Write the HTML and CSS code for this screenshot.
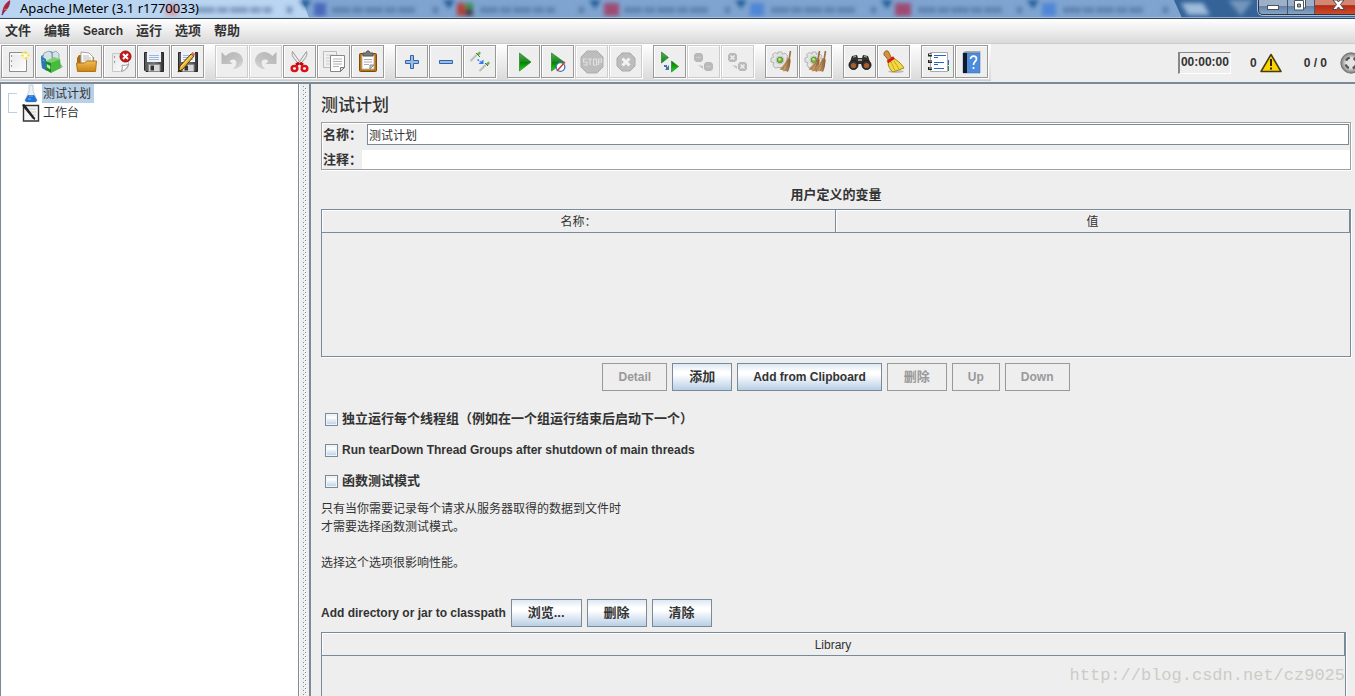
FILE: index.html
```html
<!DOCTYPE html>
<html lang="zh-CN">
<head>
<meta charset="utf-8">
<title>Apache JMeter (3.1 r1770033)</title>
<link rel="stylesheet" href="styles.css">
</head>
<body>
<svg class="defs" width="0" height="0" aria-hidden="true">
  <defs>
    <linearGradient id="green" x1="0" y1="0" x2="0" y2="1"><stop offset="0" stop-color="#4fae50"/><stop offset=".48" stop-color="#178a1b"/><stop offset=".52" stop-color="#087d08"/><stop offset="1" stop-color="#19e010"/></linearGradient>
    <linearGradient id="paper" x1="0" y1="0" x2="1" y2="1"><stop offset="0" stop-color="#e6e6e6"/><stop offset="1" stop-color="#fff"/></linearGradient>
    <linearGradient id="folder" x1="0" y1="0" x2="0" y2="1"><stop offset="0" stop-color="#f2bc55"/><stop offset="1" stop-color="#c98412"/></linearGradient>
    <linearGradient id="disk" x1="0" y1="0" x2="1" y2="0"><stop offset="0" stop-color="#555"/><stop offset=".5" stop-color="#777"/><stop offset="1" stop-color="#333"/></linearGradient>
    <linearGradient id="curl" x1="0" y1="0" x2="1" y2="1"><stop offset="0" stop-color="#b4b4b4"/><stop offset=".7" stop-color="#c6c6c6"/><stop offset="1" stop-color="#e4e4e4"/></linearGradient>
    <linearGradient id="straw" x1="0" y1="0" x2="1" y2="0"><stop offset="0" stop-color="#a88050"/><stop offset=".5" stop-color="#c79f6c"/><stop offset="1" stop-color="#8d6236"/></linearGradient>
    <radialGradient id="chrome"><stop offset="0" stop-color="#fff"/><stop offset=".6" stop-color="#ccc"/><stop offset="1" stop-color="#777"/></radialGradient>
    <filter id="soft"><feGaussianBlur stdDeviation="2"/></filter>
    <g id="floppy">
      <path d="M7.500 7.500h19v19H9l-1.500-1.500z" fill="url(#disk)" stroke="#272727"/>
      <path d="M10 7h14v10H10z" fill="#eef4fb"/><path d="M12 10.500h10M12 12.500h10M12 14.500h10" stroke="#9fb7d4"/>
      <path d="M11.500 19.500h11.500v7H11.500z" fill="#d8d8d8" stroke="#888"/><path d="M13.500 20.500h3.500v5h-3.500z" fill="#333"/>
    </g>
    <g id="gear">
      <path d="M13 7h4l.5 2.500L20 8l3 3-1.500 2.500L24 14v4l-2.500 1-1 3-3 .5H13l-3 .5-2-3 1-2.500-3-.5v-4l2.500-1L7.500 9.500l3-2L13 9z" fill="#e4e4e4" stroke="#b4b4b4"/>
      <circle cx="15" cy="15" r="4" fill="#f0f0f0" stroke="#c4c4c4"/><circle cx="15" cy="15" r="2.800" fill="#75b843" stroke="#55952a"/><circle cx="14.500" cy="14.200" r="1.200" fill="#c2eb89"/>
    </g>
    <g id="besom">
      <path d="M25.500 6L24 15" stroke="#9a6b42" stroke-width="1.600"/>
      <path d="M22.500 13l3 1c0 4-.5 9-2.500 13l-2.500-1-2 .5-1-1.500-3-.5c3-3 6-7 8-11.500z" fill="url(#straw)"/><path d="M23 15c-2 4-4 7-6 9.500M24 15c-1 5-3 9-4 11M25 15c-.5 4-1 8-2.500 11" stroke="#8b6038" stroke-width=".6" fill="none"/>
    </g>
  </defs>
</svg>

<header class="titlebar">
  <svg class="glass" viewBox="0 0 1355 18" preserveAspectRatio="none" aria-hidden="true">
    <path d="M0 0h302l7 18H0z" fill="#b9d5f1"/><path d="M302 0h876l8 18H309z" fill="#7fa4d0"/>
    <path d="M1174 0h181v18h-173z" fill="#356398"/>
    <g filter="url(#soft)">
      <path d="M299 0h12l-5 9zM443 0h12l-6 9zM589 0h12l-6 9zM735 0h12l-6 9zM881 0h12l-6 9zM1027 0h12l-6 9z" fill="#235b96"/>
      <path d="M1181 3h22l7 12h-22z" fill="#9dbbdb"/><path d="M1228 0h25l-12 16z" fill="#7396bb"/>
      <path d="M314 3h12v13h-12z" fill="#4a69be"/><path d="M457 3h8v13h-8z" fill="#b1423d"/><path d="M465 3h8v6h-8z" fill="#3d8c50"/><path d="M465 9h8v7h-8z" fill="#443e4e"/>
      <path d="M604 3h15v13h-15zM895 3h16v13h-16z" fill="#9d4c73"/><path d="M750 3h14v13h-14zM1042 3h14v13h-14z" fill="#4f86d5"/><path d="M166 4h12v12h-12z" fill="#d2a0ab"/>
      <g stroke-width="6" stroke="#45658f" stroke-dasharray="18 2 11 2" opacity=".5"><path d="M197 10h75M332 10h83M480 10h75M624 10h84M771 10h85M918 10h84M1063 10h80"/></g>
      <g stroke="#45658f" stroke-width="2" opacity=".8"><path d="M287 7l5 6m0-6l-5 6M433 7l5 6m0-6l-5 6M579 7l5 6m0-6l-5 6M725 7l5 6m0-6l-5 6M871 7l5 6m0-6l-5 6M1017 7l5 6m0-6l-5 6M1163 7l5 6m0-6l-5 6"/></g>
    </g>
    <path d="M0 17.500h1355" stroke="#b4cce6" opacity=".7"/>
  </svg>
  <svg class="feather" viewBox="0 0 16 18" aria-hidden="true"><path d="M2 15C2 8 5 3 10 0c1 4-2 10-7 13z" fill="#c6222d"/><path d="M2 15L9 2" stroke="#6b3779" stroke-width="1.500"/><path d="M4 9l3 1" stroke="#ef7d39"/></svg>
  <h1 class="app-name">Apache JMeter (3.1 r1770033)</h1>
  <div class="window-buttons">
    <button class="win" aria-label="Minimize"><svg width="28" height="15"><rect x="8.500" y="5.500" width="11" height="4" fill="#fff" stroke="#4a5361"/></svg></button>
    <button class="win" aria-label="Restore"><svg width="26" height="15"><path d="M9.500-2h8v10h-8z" fill="#fff" stroke="#4a5361"/><path d="M6.500.5h9v9.500h-9z" fill="#fff" stroke="#4a5361"/><path d="M9.500 4h3v3h-3z" fill="#8aa" stroke="#4a5361"/></svg></button>
    <button class="win win-close" aria-label="Close"><svg width="40" height="15"><path d="M18 0h4l1.500 2L25 0h4l-3.500 4.500 4 5h-4L23.500 7l-2 2.500h-4l4-5z" fill="#fff" stroke="#4d4250"/></svg></button>
  </div>
</header>

<nav class="menubar">
  <button class="menu zh">文件</button><button class="menu zh">编辑</button><button class="menu">Search</button><button class="menu zh">运行</button><button class="menu zh">选项</button><button class="menu zh">帮助</button>
</nav>

<div class="toolbar">
  <div class="tools">
    <div class="group">
      <button class="tool" aria-label="New"><svg viewBox="1 1 31 31"><path d="M8.500 7.500h17v19h-17z" fill="url(#paper)" stroke="#8f8f8f"/><path d="M10 9h14v16H10z" fill="none" stroke="#fff"/><path d="M10.500 10v2M10.500 15v2M10.500 20v2" stroke="#999"/><circle cx="24.500" cy="10.500" r="4.500" fill="#f9ee98" opacity=".7"/><path d="M24.500 6v8M20.500 10.500h8" stroke="#f0dc3c"/><circle cx="24.500" cy="10.500" r="1.800" fill="#fff"/></svg></button>
      <button class="tool" aria-label="Templates"><svg viewBox="1 1 31 31"><path d="M20 25l8-3-3-4z" fill="#aaa"/><path d="M6 11l9-5 9 3v5L12 25l-5-2z" fill="#3d8ec0"/><path d="M9 8l5-2 3 2v7l-5 3-4-6zM17 8l4-2 3 3v6l-6 2z" fill="#d5e2e7" stroke="#7c959f" stroke-width=".7"/><path d="M6 12l5 2 1 12-5-3z" fill="#2879b0"/><path d="M11 16l5 2v10l-5-3z" fill="#198a27"/><path d="M16 18l9-4 1 9-10 5z" fill="#45bc3c"/><path d="M11 16l8-4 6 2-9 4z" fill="#7bd168"/><path d="M7.500 15l2 1M12 19.500l3 1.500v3l-3-2z" stroke="#c6e4b7" fill="#c6e4b7" stroke-width=".5"/></svg></button>
      <button class="tool" aria-label="Open"><svg viewBox="1 1 31 31"><path d="M8 13l2-3h5l2 2h8v13H8z" fill="#a96b13"/><path d="M12 18V7l8 1 4 4v7z" fill="#fff" stroke="#a6a6a6"/><path d="M14 11h6M14 13h8M14 15h8" stroke="#b7b7b7"/><path d="M7.500 18h8l2-2h10l-1 10.500h-18z" fill="url(#folder)" stroke="#b07516"/></svg></button>
      <button class="tool" aria-label="Close"><svg viewBox="1 1 31 31"><path d="M9.500 8.500h16v12c-1 4-4 6-8 6h-8z" fill="url(#paper)" stroke="#c8c8c8"/><path d="M18 26c2-1 1-4 1-6 3 1 5 0 6.500-1-1 4-4 7-7.500 7z" fill="#fff" stroke="#999"/><path d="M11.500 11v2M11.500 16v2" stroke="#999"/><circle cx="22.500" cy="11.500" r="5.500" fill="#c8171c" stroke="#8f1111"/><path d="M20 9l5 5m0-5l-5 5" stroke="#fff" stroke-width="2"/></svg></button>
      <button class="tool" aria-label="Save"><svg viewBox="1 1 31 31"><use href="#floppy"/></svg></button>
      <button class="tool" aria-label="Save as"><svg viewBox="1 1 31 31"><use href="#floppy"/><path d="M7 27l2-6L20 9l3 2-11 13z" fill="#ecb52f" stroke="#5b3b12"/><path d="M10 22L20.500 10.500" stroke="#ffe27c"/><path d="M20 9l1.500-2 3 2-1.500 2z" fill="#d86b5c"/><path d="M7 27l1-3 2 2z" fill="#222"/></svg></button>
    </div>
    <div class="group">
      <button class="tool" disabled aria-label="Undo"><svg viewBox="1 1 31 31"><path d="M6.500 7v12h11l-3-3c4-3 9-1 6 5-1 2-3 3-3 3 8 0 12-6 10-11-3-7-11-8-17-2z" fill="url(#curl)"/></svg></button>
      <button class="tool" disabled aria-label="Redo"><svg viewBox="1 1 31 31"><g transform="matrix(-1 0 0 1 34 0)"><path d="M6.500 7v12h11l-3-3c4-3 9-1 6 5-1 2-3 3-3 3 8 0 12-6 10-11-3-7-11-8-17-2z" fill="url(#curl)"/></g></svg></button>
      <button class="tool" aria-label="Cut"><svg viewBox="1 1 31 31"><path d="M9.500 6.500c-1 3 0 5 2 7.500l4 5 2-1zM23.500 6.500c1 3 0 5-2 7.500l-4 5-2-1z" fill="#eee" stroke="#999"/><path d="M16 18l-3 2M17 18l3 2" stroke="#c00" stroke-width="3"/><ellipse cx="11.500" cy="23.500" rx="2.800" ry="2.500" fill="#fff" stroke="#d91219" stroke-width="2.500"/><ellipse cx="21.500" cy="23.500" rx="2.800" ry="2.500" fill="#fff" stroke="#d91219" stroke-width="2.500"/></svg></button>
      <button class="tool" aria-label="Copy"><svg viewBox="1 1 31 31"><path d="M6.500 6.500h13v16h-13z" fill="#f1f1f1" stroke="#bbb"/><path d="M9 10h8M9 13h5M9 16h4M9 19h4" stroke="#ccc"/><path d="M13.500 10.500h14v12l-4 4h-10z" fill="#fff" stroke="#888"/><path d="M16 14h9M16 16.500h9M16 19h9M16 21.500h6" stroke="#b2b2b2"/><path d="M23.500 26.500v-4h4z" fill="#ddd" stroke="#777"/></svg></button>
      <button class="tool" aria-label="Paste"><svg viewBox="1 1 31 31"><rect x="8.500" y="8.500" width="17" height="18" rx="1" fill="#b8730f" stroke="#7d4b08"/><path d="M11 10h12v14H11z" fill="#fff" stroke="#bbb"/><path d="M13 14.500h8M13 17h8M13 19.500h5" stroke="#aaa"/><path d="M19 24v-4h4z" fill="#ccc" stroke="#888"/><path d="M12 11V8h3l1-2h2l1 2h3v3z" fill="#7a7d72" stroke="#50534a"/></svg></button>
    </div>
    <div class="group">
      <button class="tool" aria-label="Expand all"><svg viewBox="1 1 31 31"><path d="M15.500 10.500h3v5h5v3h-5v5h-3v-5h-5v-3h5z" fill="#9bbce6" stroke="#3265a8"/></svg></button>
      <button class="tool" aria-label="Collapse all"><svg viewBox="1 1 31 31"><path d="M10.500 15.500h13v3h-13z" fill="#9bbce6" stroke="#3265a8"/></svg></button>
      <button class="tool" aria-label="Toggle"><svg viewBox="1 1 31 31"><path d="M7.500 16l6-6M16.500 26l6-6" stroke="#b6c1b6" stroke-width="2"/><path d="M13.500 9l3-2.500 1.500 1.500-2.500 3zM22.500 19l3-2.500 1.500 1.500-2.500 3z" fill="#6fae5e"/><path d="M13 8l4 4M22 18l3 3" stroke="#427a3a"/><path d="M14.500 14.500l3 2.500" stroke="#317bea" stroke-width="1.500" stroke-dasharray="2 1"/><path d="M20.500 14.500v4.500h-5z" fill="#317bea"/></svg></button>
    </div>
    <div class="group">
      <button class="tool" aria-label="Start"><svg viewBox="1 1 31 31"><path d="M12.500 8v18L24 17z" fill="url(#green)" stroke="#277e28" stroke-width=".7"/></svg></button>
      <button class="tool" aria-label="Start no pauses"><svg viewBox="1 1 31 31"><path d="M10.500 8v18L23 17z" fill="url(#green)" stroke="#277e28" stroke-width=".7"/><circle cx="19.500" cy="22" r="4.300" fill="#fff" stroke="#3f75b8" stroke-width="1.300"/><path d="M16 26l8-9" stroke="#d13830" stroke-width="1.400"/></svg></button>
      <button class="tool" disabled aria-label="Stop"><svg viewBox="1 1 31 31"><path d="M12 6h10l6 6v10l-6 6H12l-6-6V12z" fill="#bdbdbd" stroke="#adadad"/><path d="M12 14H8.500v3H12v3H8.500M13 14h4m-2 0v6M18.500 14h3v6h-3zM23.500 20v-6h3v3h-3" fill="none" stroke="#e0e0e0" stroke-width="1.200"/></svg></button>
      <button class="tool" disabled aria-label="Shutdown"><svg viewBox="1 1 31 31"><path d="M13 8h8l5 5v8l-5 5h-8l-5-5v-8z" fill="#bdbdbd" stroke="#aaa"/><path d="M13.500 13.500l7 7m0-7l-7 7" stroke="#f3f3f3" stroke-width="3"/></svg></button>
    </div>
    <div class="group">
      <button class="tool" aria-label="Remote start all"><svg viewBox="1 1 31 31"><path d="M8.500 7v11l7-5.500zM18.500 16v11l7-5.500z" fill="url(#green)" stroke="#277e28" stroke-width=".7"/><path d="M11 21h3M13 23h3" stroke="#4573ac" stroke-width="2"/><path d="M16 20v5h-4z" fill="#4573ac"/></svg></button>
      <button class="tool" disabled aria-label="Remote stop all"><svg viewBox="1 1 31 31"><path d="M9 8h5l2 2v5l-2 2H9l-2-2v-5zM19 17h5l2 2v5l-2 2h-5l-2-2v-5z" fill="#b9b9b9"/><path d="M9 12.500h5M19 21.500h5" stroke="#c9c9c9" stroke-width="1.500"/><path d="M11 20l5 1v3z" fill="#c2c2c2"/></svg></button>
      <button class="tool" disabled aria-label="Remote shutdown all"><svg viewBox="1 1 31 31"><path d="M9 8h5l2 2v5l-2 2H9l-2-2v-5zM19 17h5l2 2v5l-2 2h-5l-2-2v-5z" fill="#b9b9b9"/><path d="M9.500 10.500l4 4m0-4l-4 4M19.500 19.500l4 4m0-4l-4 4" stroke="#eee" stroke-width="1.500"/><path d="M11 20l5 1v3z" fill="#c2c2c2"/></svg></button>
    </div>
    <div class="group">
      <button class="tool" aria-label="Clear"><svg viewBox="1 1 31 31"><use href="#gear"/><use href="#besom"/></svg></button>
      <button class="tool" aria-label="Clear all"><svg viewBox="1 1 31 31"><use href="#gear"/><use href="#besom" x="-5"/><use href="#besom" x="1"/></svg></button>
    </div>
    <div class="group">
      <button class="tool" aria-label="Find"><svg viewBox="1 1 31 31"><path d="M9 11l5-1 1 3h4l1-3 5 1 3 9-7 3-3-4h-3l-3 4-6-3z" fill="#30302e"/><path d="M10 12l3-.5M21 11.500l3 .5" stroke="#aaa"/><circle cx="10.500" cy="20" r="4.500" fill="#333" stroke="#1b1b1b"/><circle cx="23.500" cy="20" r="4.500" fill="#333" stroke="#1b1b1b"/><circle cx="10.500" cy="20.500" r="2.600" fill="#a95f2d"/><circle cx="23.500" cy="20.500" r="2.600" fill="#a95f2d"/><path d="M15 15h4" stroke="#999" stroke-width="2"/></svg></button>
      <button class="tool" aria-label="Reset search"><svg viewBox="1 1 31 31"><ellipse cx="19" cy="26.500" rx="8" ry="1.500" fill="#bbb"/><path d="M7 9c0-4 5-4 5-1l3 6-3 2-3-4c-1-1-2-1-2-3z" fill="#d1943b" stroke="#96601c"/><path d="M11 17l5-4c4 2 8 5 11 10L16 27c-3-2-5-6-5-10z" fill="#f3d83f" stroke="#ad8a14"/><path d="M14 17l4 8.500M17 16l5 8" stroke="#c7a526"/><path d="M10.500 17l6.500-4.500" stroke="#d51b17" stroke-width="3"/></svg></button>
    </div>
    <div class="group">
      <button class="tool" aria-label="Function helper"><svg viewBox="1 1 31 31"><path d="M24 15h4v5h-4z" fill="#2468d0"/><path d="M24 21h4v5h-4z" fill="#159b25"/><path d="M9.500 7.500h17v19h-17z" fill="#fff" stroke="#aaa"/><path d="M7 10h4M7 16.500h4M7 23.500h4" stroke="#222" stroke-width="3"/><path d="M8 9.500h3M8 16h3M8 23h3" stroke="#ccc"/><path d="M13 10.500h12M13 12.500h4M13 17.500h10M13 19.500h4M13 23.500h10" stroke="#2466bd"/></svg></button>
      <button class="tool" aria-label="Help"><svg viewBox="1 1 31 31"><path d="M8 8l2-2h16l-1 2z" fill="#aaa"/><path d="M8 8h17v20H8z" fill="#4d8cdb" stroke="#3269ac" stroke-width=".5"/><path d="M8 8h4v20H8z" fill="#111b27"/><path d="M15.500 14c0-4 6-3.500 6 0 0 2.500-3 2.500-3 6M18.500 22v2" fill="none" stroke="#fff" stroke-width="1.700"/></svg></button>
    </div>
  </div>
  <div class="status">
    <output class="timer">00:00:00</output>
    <span class="errors">0</span>
    <svg class="warn" viewBox="0 0 22 20" aria-hidden="true"><path d="M11 1.500L21 18.500H1z" fill="#fad400" stroke="#483b10" stroke-width="1.500" stroke-linejoin="round"/><path d="M11 6v7M11 14.500v2" stroke="#332705" stroke-width="2"/></svg>
    <span class="threads">0 / 0</span>
    <svg class="dial" viewBox="0 0 15 22" aria-hidden="true"><circle cx="11" cy="11" r="10.200" fill="url(#chrome)" stroke="#777"/><circle cx="11" cy="11" r="5.500" fill="#e4e4e4" stroke="#555" stroke-width="2.500" stroke-dasharray="4.640 4" stroke-dashoffset="-2"/></svg>
  </div>
</div>

<div class="workspace">
  <aside class="tree">
    <ul class="nodes">
      <li class="node"><svg class="node-icon" viewBox="0 0 20 19" aria-hidden="true"><path d="M8 1h4v6l4 9c0 1-1 2-2 2H6c-1 0-2-1-2-2l4-9z" fill="#edf1f4" stroke="#bcc4cc" stroke-width=".8"/><path d="M7 11h6l3 5c0 1-1 2-2 2H6c-1 0-2-1-2-2z" fill="#2273d2"/><path d="M8 12h4M7 15h3" stroke="#74b5f3"/></svg><span class="node-name selected">测试计划</span></li>
      <li class="node"><svg class="node-icon" viewBox="0 0 20 19" aria-hidden="true"><path d="M2.500 2.500h15v15.500h-15z" fill="#f5f5f5" stroke="#333" stroke-width="1.400"/><path d="M6 6h9M6 9h9M8 12h7M10 15h5" stroke="#ccc"/><path d="M1 2l2-1 2 2 9 12v2l-2-1L3 5z" fill="#222"/></svg><span class="node-name">工作台</span></li>
    </ul>
  </aside>
  <div class="divider"></div>
  <main class="panel">
    <h2 class="heading">测试计划</h2>
    <div class="fields">
      <div class="field"><label class="zh name-label" for="name">名称：</label><input class="text name-input" id="name" value="测试计划"></div>
      <div class="field"><label class="zh note-label" for="note">注释：</label><input class="text note-input" id="note"></div>
    </div>
    <h3 class="zh caption">用户定义的变量</h3>
    <div class="grid-box variables">
      <table class="grid"><thead><tr><th>名称：</th><th>值</th></tr></thead></table>
    </div>
    <div class="row actions">
      <button class="btn" disabled>Detail</button><button class="btn zh">添加</button><button class="btn">Add from Clipboard</button><button class="btn zh" disabled>删除</button><button class="btn" disabled>Up</button><button class="btn" disabled>Down</button>
    </div>
    <div class="options">
      <label class="option zh"><input type="checkbox" class="check">独立运行每个线程组（例如在一个组运行结束后启动下一个）</label>
      <label class="option"><input type="checkbox" class="check">Run tearDown Thread Groups after shutdown of main threads</label>
      <label class="option zh"><input type="checkbox" class="check">函数测试模式</label>
    </div>
    <p class="note">只有当你需要记录每个请求从服务器取得的数据到文件时<br>才需要选择函数测试模式。<br><br>选择这个选项很影响性能。</p>
    <div class="row classpath"><span>Add directory or jar to classpath</span><button class="btn zh">浏览...</button><button class="btn zh">删除</button><button class="btn zh">清除</button></div>
    <div class="grid-box library">
      <table class="grid"><thead><tr><th>Library</th></tr></thead></table>
    </div>
    <div class="watermark">http://blog.csdn.net/cz9025</div>
  </main>
</div>
</body>
</html>
```
FILE: styles.css
```css
* { box-sizing: border-box; }
body {
  margin: 0;
  height: 100vh;
  display: flex;
  flex-direction: column;
  overflow: hidden;
  background: #eee;
  color: #333;
  font: bold 12px/16px "Liberation Sans", "Noto Sans CJK SC", sans-serif;
}
button, input { font: inherit; color: inherit; margin: 0; }
h1, h2, h3, p, ul { margin: 0; padding: 0; }
.zh { font-size: 13px; }
.defs { position: absolute; }

/* Window frame */
.titlebar { position: relative; display: flex; flex: none; height: 19px; border-bottom: 1px solid #34465c; overflow: hidden; }
.glass { position: absolute; inset: 0; width: 100%; height: 18px; }
.feather { position: relative; flex: none; width: 16px; height: 18px; }
.app-name { position: relative; flex: 1; padding-left: 4px; color: #000; font: 13px/16px "Noto Sans", sans-serif; }
.window-buttons { position: relative; display: flex; height: 15px; border: 1px solid #26364a; border-top: 0; border-right: 0; border-radius: 0 0 0 5px; box-shadow: 0 0 0 1px #a9c0d8; overflow: hidden; }
.win { display: flex; padding: 0; border: 0; border-right: 1px solid #43566e; background: linear-gradient(#9db0c8 0 40%, #6582a4 45%, #86a5c5); }
.win-close { border-right: 0; background: linear-gradient(#d18774 0 35%, #b22c14 40%, #cf4b2a); }

/* Menu */
.menubar { display: flex; flex: none; align-items: center; height: 25px; padding-left: 5px; gap: 13px; border-bottom: 1px solid #ccc; background: linear-gradient(#fff, #dadada); }
.menu { padding: 0; border: 0; background: none; line-height: 20px; }

/* Toolbar */
.toolbar { display: flex; flex: none; justify-content: space-between; height: 38px; }
.tools { display: flex; gap: 11px; padding: 1px 3px 0 1px; border-bottom: 1px solid #ccc; background: linear-gradient(#fff, #dadada); height: 37px; }
.group { display: flex; gap: 1px; }
.tool { display: block; width: 33px; height: 33px; padding: 0; border: 1px solid #999; background: #eee; box-shadow: inset 1px 1px #fff, 1px 1px #fff; }
.tool:disabled { border-color: #ccc; }
.tool svg { display: block; width: 31px; height: 31px; }
.status { display: flex; align-items: center; }
.timer { padding: 1px 1px 3px; border: 1px solid #fff; border-top-color: #888; border-left: 2px solid #888; }
.errors { margin-left: 19px; }
.warn { width: 22px; height: 20px; margin-left: 3px; }
.threads { margin-left: 22px; }
.dial { width: 15px; height: 22px; margin-left: 13px; }

/* Workspace */
.workspace { display: flex; flex: 1; min-height: 0; border-top: 2px solid #7a8a99; }
.tree { flex: none; width: 299px; border-right: 1px solid #7a8a99; border-left: 1px solid #7a8a99; background: #fff; }
.nodes { list-style: none; padding-left: 7px; background: linear-gradient(#b8cfe5, #b8cfe5) 7px 9px / 1px 20px no-repeat, linear-gradient(#b8cfe5, #b8cfe5) 7px 9px / 9px 1px no-repeat, linear-gradient(#b8cfe5, #b8cfe5) 7px 28px / 9px 1px no-repeat; }
.node { display: flex; align-items: center; height: 19px; padding-left: 13px; font-weight: normal; }
.node-icon { width: 20px; height: 19px; }
.node-name { height: 19px; padding: 0 3px 0 1px; margin-left: 1px; line-height: 20px; }
.selected { background: #b8cfe5; }
.divider {
  flex: none;
  width: 10px;
  padding: 2px 2px 0 3px;
  border-left: 1px solid #fff;
  background:
    conic-gradient(from 0deg at 1px 1px, transparent 75%, #7a8a99 0) 0 0 / 4px 4px,
    conic-gradient(from 0deg at 1px 1px, transparent 75%, #7a8a99 0) 2px 2px / 4px 4px,
    conic-gradient(from 0deg at 1px 1px, transparent 75%, #fff 0) 1px 1px / 4px 4px,
    conic-gradient(from 0deg at 1px 1px, transparent 75%, #fff 0) 3px 3px / 4px 4px;
  background-clip: content-box;
  background-origin: content-box;
}
.panel { position: relative; display: flex; flex-direction: column; flex: 1; min-width: 0; padding: 0 4px 0 10px; border-left: 2px solid #7a8a99; }
.heading { padding-top: 10px; font-size: 17px; font-weight: 500; line-height: 24px; }
.fields { display: flex; flex-direction: column; gap: 5px; margin-top: 4px; padding: 1px 0 0 1px; border: 1px solid #a0a0a0; box-shadow: inset 1px 1px #fff, 1px 1px #fff; }
.field { display: flex; align-items: center; }
.name-label { width: 44px; }
.note-label { width: 39px; }
.text { flex: 1; min-width: 0; height: 21px; padding: 0 1px; border: 0; background: #fff; font-size: 12px; font-weight: normal; }
.name-input { border: 1px solid #7a8a99; margin-right: 1px; }
.note-input { height: 19px; }
.caption { margin-top: 16px; line-height: 18px; text-align: center; }
.grid-box { border: 1px solid #7a8a99; box-shadow: 1px 1px #fff; }
.variables { height: 148px; margin-top: 5px; }
.grid { width: 100%; border-collapse: collapse; table-layout: fixed; }
.grid th { height: 22px; padding: 2px 0 0; border-bottom: 1px solid #7a8a99; border-right: 1px solid #7a8a99; box-shadow: inset 1px 1px #fff; font-weight: normal; }
.row { display: flex; align-items: center; gap: 5px; }
.btn { height: 28px; padding: 0 15px; border: 1px solid #7a8a99; background: linear-gradient(#dde8f3, #fff 30%, #fff 40%, #b8cfe5); }
.btn.zh { padding: 0 16px; }
.btn:disabled { border-color: #999; background: #eee; color: #999; }
.actions { justify-content: center; margin-top: 6px; }
.options { display: flex; flex-direction: column; gap: 13px; margin-top: 19px; padding-left: 4px; }
.option { display: flex; align-items: center; gap: 4px; height: 18px; }
.check { appearance: none; width: 13px; height: 13px; border: 1px solid #7a8a99; background: linear-gradient(#dde8f3, #fff 30%, #b8cfe5); box-shadow: inset 0 0 0 1px #eef4fa; }
.note { margin-top: 10px; font-weight: normal; line-height: 18px; }
.classpath { margin-top: 27px; }
.library { flex: 1; margin: 5px 5px 0 0; border-bottom: 0; }
.watermark { position: absolute; right: 10px; bottom: 8px; color: #ccccc6; font: 17px/24px "Liberation Mono", monospace; }
```
